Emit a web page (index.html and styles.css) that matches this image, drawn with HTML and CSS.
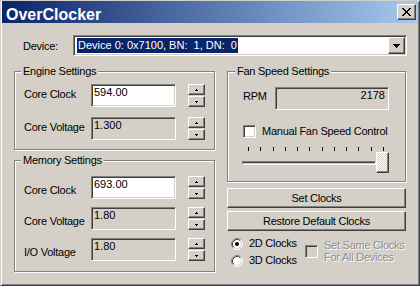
FILE: index.html
```html
<!DOCTYPE html>
<html>
<head>
<meta charset="utf-8">
<title>OverClocker</title>
<link rel="stylesheet" href="styles.css">
</head>
<body>
<div class="window">
  <div class="titlebar">
    <span class="title">OverClocker</span>
    <span class="close raised">
      <svg width="9" height="8" viewBox="0 0 9 8"><path fill="#000" d="M0 0h2v1H0zM7 0h2v1H7zM1 1h2v1H1zM6 1h2v1H6zM2 2h2v1H2zM5 2h2v1H5zM3 3h3v1H3zM3 4h3v1H3zM2 5h2v1H2zM5 5h2v1H5zM1 6h2v1H1zM6 6h2v1H6zM0 7h2v1H0zM7 7h2v1H7z"/></svg>
    </span>
  </div>
  <div class="content">
    <div class="device-row">
      <span class="device-label">Device:</span>
      <div class="combo sunken">
        <div class="combo-value"><span class="sel">Device 0: 0x7100, BN:&nbsp; 1, DN:&nbsp; 0</span></div>
        <span class="combo-btn raised">
          <svg width="7" height="4" viewBox="0 0 7 4"><path fill="#000" d="M0 0h7v1H0zM1 1h5v1H1zM2 2h3v1H2zM3 3h1v1H3z"/></svg>
        </span>
      </div>
    </div>
    <div class="columns">
      <div class="col-left">
        <fieldset class="group engine">
          <legend>Engine Settings</legend>
          <div class="rows">
            <div class="row">
              <span class="lbl">Core Clock</span>
              <span class="edit sunken">594.00</span>
              <span class="spin">
                <span class="spin-btn raised"><svg width="3" height="2" viewBox="0 0 3 2"><path d="M1 0h1v1H1zM0 1h3v1H0z"/></svg></span>
                <span class="spin-btn raised"><svg width="3" height="2" viewBox="0 0 3 2"><path d="M0 0h3v1H0zM1 1h1v1H1z"/></svg></span>
              </span>
            </div>
            <div class="row">
              <span class="lbl">Core Voltage</span>
              <span class="edit sunken ro">1.300</span>
              <span class="spin">
                <span class="spin-btn raised"><svg width="3" height="2" viewBox="0 0 3 2"><path d="M1 0h1v1H1zM0 1h3v1H0z"/></svg></span>
                <span class="spin-btn raised"><svg width="3" height="2" viewBox="0 0 3 2"><path d="M0 0h3v1H0zM1 1h1v1H1z"/></svg></span>
              </span>
            </div>
          </div>
        </fieldset>
        <fieldset class="group memory">
          <legend>Memory Settings</legend>
          <div class="rows">
            <div class="row">
              <span class="lbl">Core Clock</span>
              <span class="edit sunken">693.00</span>
              <span class="spin">
                <span class="spin-btn raised"><svg width="3" height="2" viewBox="0 0 3 2"><path d="M1 0h1v1H1zM0 1h3v1H0z"/></svg></span>
                <span class="spin-btn raised"><svg width="3" height="2" viewBox="0 0 3 2"><path d="M0 0h3v1H0zM1 1h1v1H1z"/></svg></span>
              </span>
            </div>
            <div class="row">
              <span class="lbl">Core Voltage</span>
              <span class="edit sunken ro">1.80</span>
              <span class="spin">
                <span class="spin-btn raised"><svg width="3" height="2" viewBox="0 0 3 2"><path d="M1 0h1v1H1zM0 1h3v1H0z"/></svg></span>
                <span class="spin-btn raised"><svg width="3" height="2" viewBox="0 0 3 2"><path d="M0 0h3v1H0zM1 1h1v1H1z"/></svg></span>
              </span>
            </div>
            <div class="row">
              <span class="lbl">I/O Voltage</span>
              <span class="edit sunken ro">1.80</span>
              <span class="spin">
                <span class="spin-btn raised"><svg width="3" height="2" viewBox="0 0 3 2"><path d="M1 0h1v1H1zM0 1h3v1H0z"/></svg></span>
                <span class="spin-btn raised"><svg width="3" height="2" viewBox="0 0 3 2"><path d="M0 0h3v1H0zM1 1h1v1H1z"/></svg></span>
              </span>
            </div>
          </div>
        </fieldset>
      </div>
      <div class="col-right">
        <fieldset class="group fan">
          <legend>Fan Speed Settings</legend>
          <div class="rpm-row">
            <span class="lbl">RPM</span>
            <span class="readout sunken">2178</span>
          </div>
          <div class="check-row">
            <span class="checkbox sunken"></span>
            <span class="lbl-text">Manual Fan Speed Control</span>
          </div>
          <div class="ticks">
            <i></i><i></i><i></i><i></i><i></i><i></i><i></i><i></i><i></i><i></i><i></i><i></i>
          </div>
          <div class="slider">
            <span class="track"></span>
            <span class="thumb"></span>
          </div>
        </fieldset>
        <button class="btn raised first">Set Clocks</button>
        <button class="btn raised">Restore Default Clocks</button>
        <div class="options">
          <div class="radios">
            <div class="radio-row">
              <svg class="radio" width="12" height="12" viewBox="0 0 12 12">
                <circle cx="6" cy="6" r="5" fill="#fff"/>
                <path d="M9.89 2.11A5.5 5.5 0 0 0 2.11 9.89" fill="none" stroke="#808080"/>
                <path d="M2.11 9.89A5.5 5.5 0 0 0 9.89 2.11" fill="none" stroke="#fff"/>
                <path d="M9.18 2.82A4.5 4.5 0 0 0 2.82 9.18" fill="none" stroke="#404040"/>
                <path d="M2.82 9.18A4.5 4.5 0 0 0 9.18 2.82" fill="none" stroke="#d4d0c8"/>
                <circle cx="6" cy="6" r="2" fill="#000"/>
              </svg>
              <span class="lbl-text">2D Clocks</span>
            </div>
            <div class="radio-row">
              <svg class="radio" width="12" height="12" viewBox="0 0 12 12">
                <circle cx="6" cy="6" r="5" fill="#fff"/>
                <path d="M9.89 2.11A5.5 5.5 0 0 0 2.11 9.89" fill="none" stroke="#808080"/>
                <path d="M2.11 9.89A5.5 5.5 0 0 0 9.89 2.11" fill="none" stroke="#fff"/>
                <path d="M9.18 2.82A4.5 4.5 0 0 0 2.82 9.18" fill="none" stroke="#404040"/>
                <path d="M2.82 9.18A4.5 4.5 0 0 0 9.18 2.82" fill="none" stroke="#d4d0c8"/>
              </svg>
              <span class="lbl-text">3D Clocks</span>
            </div>
          </div>
          <div class="same">
            <span class="checkbox sunken disabled"></span>
            <span class="disabled-text">Set Same Clocks<br>For All Devices</span>
          </div>
        </div>
      </div>
    </div>
  </div>
</div>
</body>
</html>
```
FILE: styles.css
```css
* { box-sizing: border-box; }
html, body { margin: 0; padding: 0; }
body {
  background: #d4d0c8;
  font-family: "Liberation Sans", Arial, sans-serif;
  font-size: 11px;
  line-height: 13px;
  color: #000;
}

.window {
  width: 420px;
  height: 286px;
  background: #d4d0c8;
  border: 1px solid;
  border-color: #d4d0c8 #404040 #404040 #d4d0c8;
  box-shadow: inset 1px 1px #fff, inset -1px -1px #808080;
  padding: 0 1px;
}

.raised {
  background: #d4d0c8;
  border: 1px solid;
  border-color: #fff #404040 #404040 #fff;
  box-shadow: inset -1px -1px #808080;
}
.sunken {
  border: 1px solid;
  border-color: #808080 #fff #fff #808080;
  box-shadow: inset 1px 1px #404040, inset -1px -1px #d4d0c8;
}

.titlebar {
  height: 22px;
  display: flex;
  align-items: center;
  padding-left: 4px;
  background: linear-gradient(90deg, #0a246a, #a6caf0);
  color: #fff;
}
.title {
  font-weight: bold;
  font-size: 16px;
  line-height: 16px;
  padding-top: 5px;
}
.close {
  margin-left: auto;
  margin-right: 2px;
  width: 19px;
  height: 16px;
  display: flex;
  align-items: center;
  justify-content: center;
}
.close svg, .combo-btn svg, .spin-btn svg { display: block; }

.content { padding: 0 11px 0 12px; }

.device-row {
  display: flex;
  align-items: center;
  margin-top: 12px;
}
.device-label {
  width: 59px;
  padding-left: 9px;
  padding-top: 1px;
  letter-spacing: -0.25px;
}
.combo {
  width: 334px;
  height: 21px;
  display: flex;
  align-items: center;
  background: #fff;
  padding: 1px;
}
.combo-value {
  flex: 1;
  display: flex;
  padding-left: 2px;
}
.sel {
  background: #0a246a;
  color: #fff;
  height: 15px;
  line-height: 15px;
  padding: 0 1px;
}
.combo-btn {
  width: 17px;
  height: 17px;
  display: flex;
  align-items: center;
  justify-content: center;
}

.columns {
  display: flex;
  align-items: flex-start;
  gap: 12px;
  margin-top: 9px;
}
.col-left {
  width: 201px;
  display: flex;
  flex-direction: column;
  gap: 4px;
}
.col-right {
  width: 179px;
  display: flex;
  flex-direction: column;
}

.group {
  margin: 0;
  padding: 0;
  min-width: 0;
  border: 1px solid #808080;
  box-shadow: inset 1px 1px #fff, 1px 1px #fff;
}
.group legend {
  padding: 0 2px;
  margin-left: 6px;
  line-height: 13px;
  background: #d4d0c8;
  letter-spacing: -0.25px;
}
.fan legend { margin-left: 7px; }

.engine { padding: 6px 0 9px; }
.memory { padding: 9px 0 10px; }
.rows { display: flex; flex-direction: column; }
.engine .rows { gap: 10px; }
.memory .rows { gap: 8px; }

.row {
  display: flex;
  align-items: flex-start;
  height: 23px;
  padding-left: 9px;
}
.lbl {
  width: 67px;
  letter-spacing: -0.25px;
}
.engine .lbl { margin-top: 4px; }
.memory .lbl { margin-top: 8px; }

.edit {
  width: 85px;
  height: 23px;
  background: #fff;
  padding: 1px 0 0 2px;
}
.edit.ro { background: #d4d0c8; }

.spin {
  margin-left: 12px;
  display: flex;
  flex-direction: column;
  gap: 1px;
}
.spin-btn {
  width: 17px;
  height: 11px;
  display: flex;
  align-items: center;
  justify-content: center;
}

.fan { padding: 9px 0 8px; }
.rpm-row {
  display: flex;
  align-items: flex-start;
  padding-left: 15px;
}
.rpm-row .lbl { width: 32px; margin-top: 3px; }
.readout {
  width: 114px;
  height: 23px;
  background: #d4d0c8;
  text-align: right;
  padding: 1px 3px 0 0;
}

.check-row {
  display: flex;
  align-items: center;
  gap: 6px;
  height: 13px;
  margin-top: 15px;
  padding-left: 15px;
}
.lbl-text { letter-spacing: -0.25px; }
.checkbox {
  width: 13px;
  height: 13px;
  flex: none;
  background: #fff;
}
.checkbox.disabled { background: #d4d0c8; }

.ticks {
  display: flex;
  justify-content: space-between;
  width: 136px;
  height: 4px;
  margin: 9px 0 0 20px;
}
.ticks i {
  display: block;
  width: 1px;
  background: #000;
}
.slider {
  display: flex;
  align-items: center;
  height: 21px;
  margin: 1px 16px 0 14px;
}
.track {
  flex: 1;
  height: 4px;
  border: 1px solid;
  border-color: #808080 #fff #fff #808080;
  box-shadow: inset 0 1px #404040;
  background: #d4d0c8;
}
.thumb {
  width: 13px;
  height: 21px;
  border: 1px solid;
  border-color: #fff #404040 #404040 #fff;
  box-shadow: inset -1px -1px #808080;
  background: repeating-conic-gradient(#fff 0 25%, #d4d0c8 0 50%) 0 0 / 2px 2px;
}

.btn {
  width: 179px;
  height: 20px;
  padding: 0;
  margin-top: 3px;
  font: inherit;
  line-height: 13px;
  color: #000;
  letter-spacing: -0.25px;
  border-radius: 0;
}
.btn.first { margin-top: 6px; }

.options {
  display: flex;
  align-items: flex-start;
  margin-top: 6px;
}
.radios {
  width: 78px;
  padding-left: 4px;
  display: flex;
  flex-direction: column;
  gap: 4px;
}
.radio-row {
  display: flex;
  align-items: center;
  gap: 6px;
  height: 13px;
}
.radio { display: block; flex: none; }
.same {
  display: flex;
  align-items: center;
  gap: 6px;
  margin-top: 2px;
}
.disabled-text {
  line-height: 12px;
  color: #8d8d8d;
  text-shadow: 1px 1px 0 #fff;
  letter-spacing: -0.25px;
}
```
